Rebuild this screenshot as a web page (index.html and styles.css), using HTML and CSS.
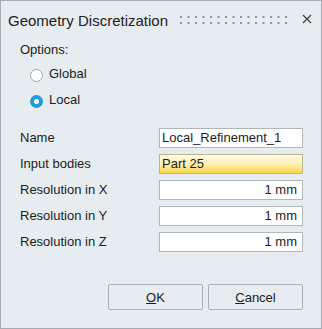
FILE: index.html
```html
<!DOCTYPE html>
<html>
<head>
  <title>Geometry Discretization</title>
  <link rel="stylesheet" href="styles.css">
</head>
<body>
  <div class="dialog">
    <div class="titlebar">
      <span class="title">Geometry Discretization</span>
      <svg class="grip" width="112" height="8" viewBox="0 0 112 8">
        <defs>
          <pattern id="dots" width="7.5" height="6" patternUnits="userSpaceOnUse">
            <rect x="0" y="0" width="2" height="2" fill="#8e9398"></rect>
          </pattern>
        </defs>
        <rect x="0" y="0" width="112" height="8" fill="url(#dots)"></rect>
      </svg>
      <svg class="close" width="10" height="10" viewBox="0 0 10 10">
        <path d="M1 1 L9 9 M9 1 L1 9" stroke="#3a3d40" stroke-width="1.2" fill="none"></path>
      </svg>
    </div>

    <div class="options">
      <div class="options-label">Options:</div>
      <label class="radio"><span class="dot"></span>Global</label>
      <label class="radio"><span class="dot on"></span>Local</label>
    </div>

    <div class="fields">
      <div class="row">
        <span class="label">Name</span>
        <div class="input">Local_Refinement_1</div>
      </div>
      <div class="row">
        <span class="label">Input bodies</span>
        <div class="input picked">Part 25</div>
      </div>
      <div class="row">
        <span class="label">Resolution in X</span>
        <div class="input num">1 mm</div>
      </div>
      <div class="row">
        <span class="label">Resolution in Y</span>
        <div class="input num">1 mm</div>
      </div>
      <div class="row">
        <span class="label">Resolution in Z</span>
        <div class="input num">1 mm</div>
      </div>
    </div>

    <div class="buttons">
      <button type="button"><u>O</u>K</button>
      <button type="button"><u>C</u>ancel</button>
    </div>
  </div>
</body>
</html>
```

FILE: styles.css
```css
body {
  margin: 0;
  background-color: #e6ecf0;
  font-family: "Liberation Sans", Arial, sans-serif;
  font-size: 13px;
  color: #1b1c1d;
}

.dialog {
  width: 322px;
  height: 329px;
  box-sizing: border-box;
  border: 1px solid #a7acb0;
  background-color: #e6ecf0;
  display: flex;
  flex-direction: column;
}

.titlebar {
  display: flex;
  align-items: flex-start;
  padding: 10px 0 0 7px;
}

.title {
  font-size: 15px;
  line-height: 20px;
  color: #1f2021;
}

.grip {
  margin-left: auto;
  margin-top: 5px;
}

.close {
  margin: 3px 9px 0 10px;
}

.options {
  margin-top: 11px;
  padding-left: 19px;
  display: flex;
  flex-direction: column;
}

.options-label {
  line-height: 16px;
  margin-bottom: 3px;
}

.radio {
  display: flex;
  align-items: center;
  height: 26px;
  padding-left: 10px;
  line-height: 16px;
}

.dot {
  width: 13px;
  height: 13px;
  box-sizing: border-box;
  border-radius: 50%;
  border: 1px solid #a2a7ab;
  background-color: #fff;
  margin-right: 6px;
  position: relative;
  top: 1px;
}

.dot.on {
  border: 4px solid #1d9ce0;
  background-color: #fff;
}

.fields {
  margin-top: 12px;
  padding: 0 18px 0 19px;
}

.row {
  display: flex;
  align-items: center;
  height: 26px;
}

.label {
  line-height: 16px;
}

.input {
  margin-left: auto;
  width: 144px;
  height: 20px;
  box-sizing: border-box;
  border: 1px solid #b1b6ba;
  background-color: #fff;
  line-height: 18px;
  padding: 0 5px 0 2px;
}

.input.picked {
  border-color: #bdb38e;
  background: linear-gradient(#fffbe6, #fff0b4 50%, #fbd746);
}

.input.num {
  text-align: right;
}

.buttons {
  margin-top: 29px;
  padding-right: 18px;
  display: flex;
  justify-content: flex-end;
  gap: 5px;
}

button {
  width: 95px;
  height: 26px;
  border: 1px solid #acb1b5;
  border-radius: 2px;
  background-color: #e6ecf0;
  font-family: "Liberation Sans", Arial, sans-serif;
  font-size: 13px;
  color: #1b1c1d;
  padding: 0;
}
```
